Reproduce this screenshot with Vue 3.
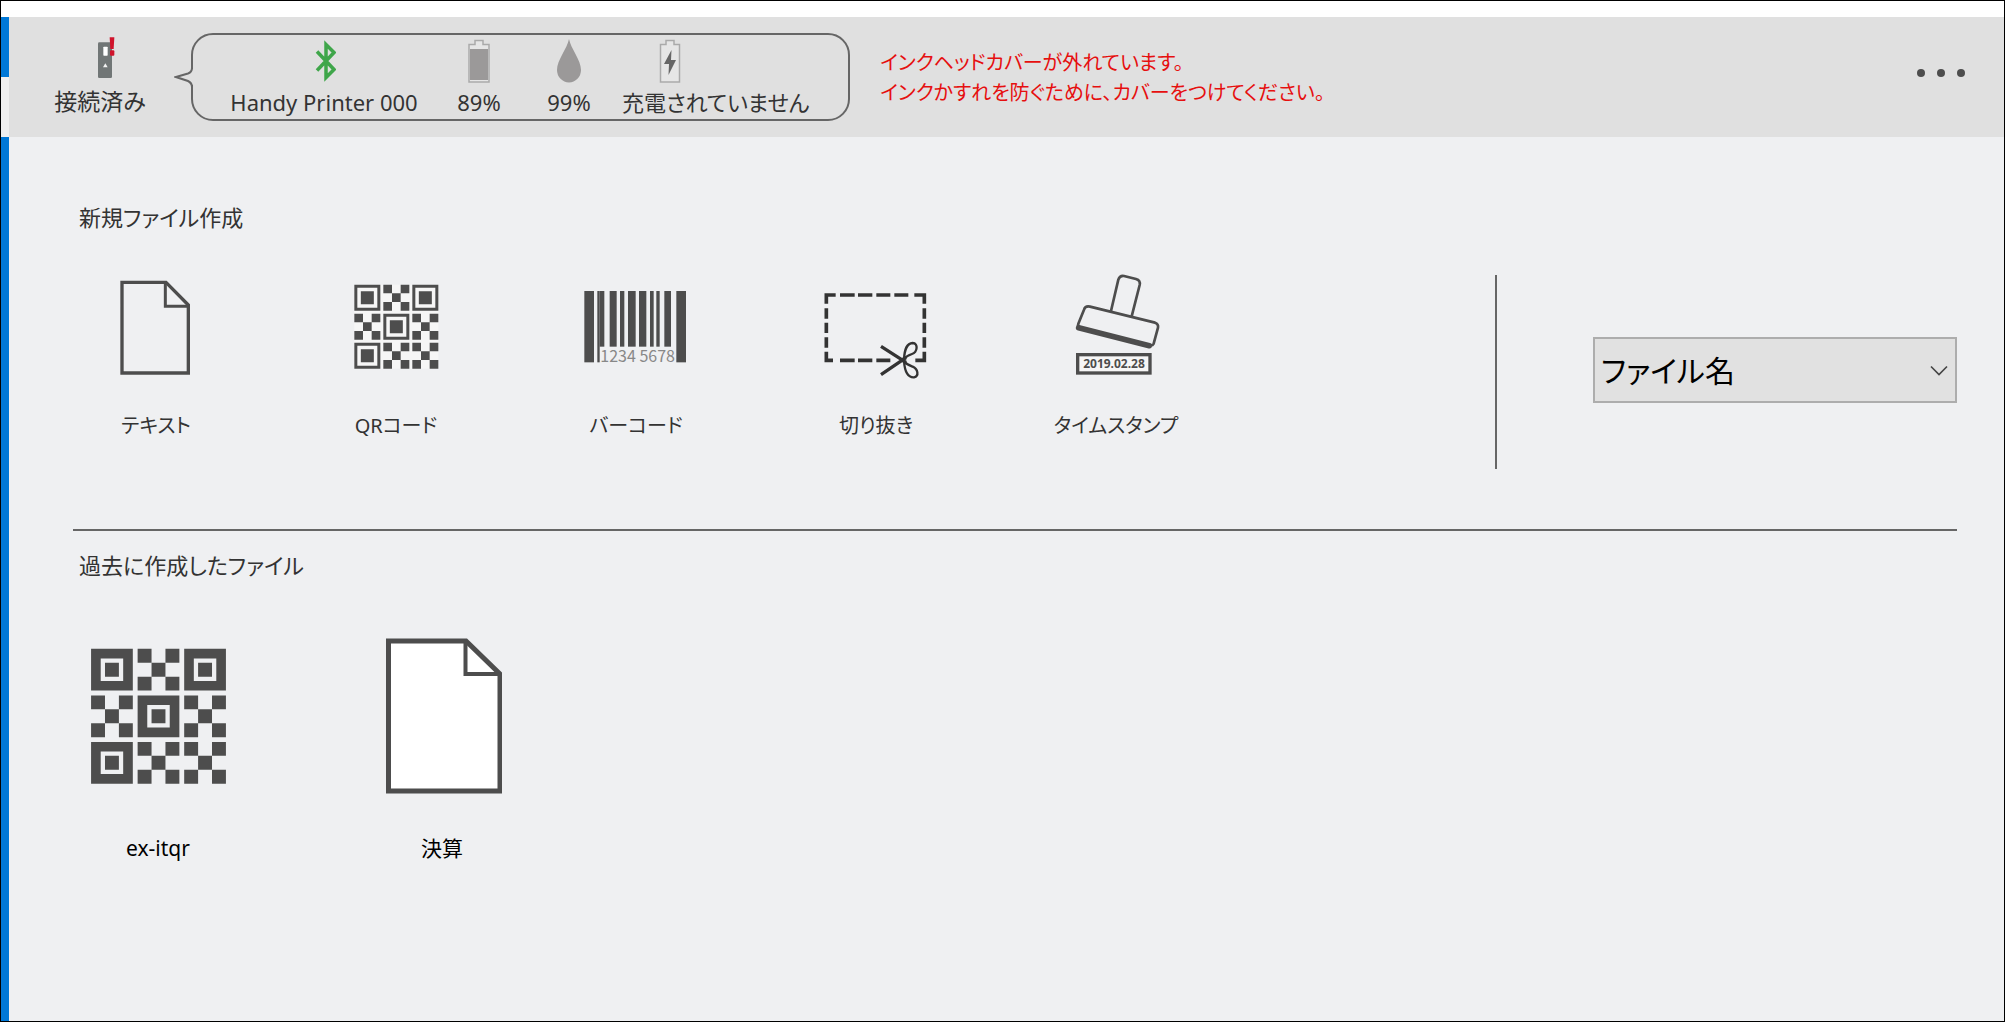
<template>
  <div class="window">
    <div class="title-strip"></div>
    <div class="body">
      <div class="rail">
        <span class="rail-top"></span>
        <span class="rail-gap"></span>
      </div>

      <div class="content">
        <header class="status-bar">
          <div class="connection">
            <svg class="status-icon" width="18" height="44" viewBox="0 0 54 132">
              <rect x="3" y="19" width="42" height="107" rx="4" fill="#717676" />
              <rect x="19" y="32" width="13" height="27" rx="2" fill="#fff" />
              <path d="M25 82 L32 94 H18 Z" fill="#f2f2f2" />
              <path d="M38 4 H52 L50 39 H40 Z" fill="#d0142c" />
              <rect x="39" y="43" width="13" height="16" rx="3" fill="#d0142c" />
            </svg>
            <span class="status-label">接続済み</span>
          </div>

          <div class="bubble">
            <svg class="bubble-tail" width="20" height="26" viewBox="0 0 20 26">
              <rect x="16" y="5" width="4" height="16" fill="#e0e0e0" />
              <path d="M18 2 V4 Q18 8 14 9.500 L2 13 L14 17 Q18 19 18 23 V24" fill="none" stroke="#666" stroke-width="2" />
            </svg>
            <div class="status-item">
              <svg class="status-icon" width="24" height="44" viewBox="0 0 24 44">
                <path d="M5 12.500 L22 30.500 L14 38.500 V5.500 L22 13.500 L5 31.500" fill="none" stroke="#3fa64a" stroke-width="3.500" />
              </svg>
              <span class="status-label">Handy Printer 000</span>
            </div>
            <div class="status-item">
              <svg class="status-icon" width="24" height="44" viewBox="0 0 24 44">
                <path d="M2 5.500 H8 V1.500 H16 V5.500 H22 V43 H2 Z" fill="#e6e6e6" stroke="#aaa" stroke-width="1.500" />
                <rect x="3" y="10" width="18" height="31" fill="#9b9999" />
              </svg>
              <span class="status-label">89%</span>
            </div>
            <div class="status-item">
              <svg class="status-icon" width="24" height="44" viewBox="0 0 24 44">
                <path d="M12 0 C14 10 24 21 24 31 A12 12.500 0 0 1 0 31 C0 21 10 10 12 0 Z" fill="#9b9999" />
              </svg>
              <span class="status-label">99%</span>
            </div>
            <div class="status-item charge">
              <svg class="status-icon" width="24" height="44" viewBox="0 0 24 44">
                <path d="M2.500 5.500 H8 V1.500 H16 V5.500 H21.500 V43 H2.500 Z" fill="#e6e6e6" stroke="#aaa" stroke-width="1.500" />
                <path d="M13.500 11 L6 25 H11 L10.500 36 L18 21 H13 Z" fill="#666" />
              </svg>
              <span class="status-label">充電されていません</span>
            </div>
          </div>

          <p class="warning">インクヘッドカバーが外れています。<br />インクかすれを防ぐために、カバーをつけてください。</p>

          <button class="more" type="button" aria-label="メニュー">
            <svg width="48" height="8" viewBox="0 0 48 8" fill="#4d4d4d">
              <circle cx="4" cy="4" r="4" />
              <circle cx="24" cy="4" r="4" />
              <circle cx="44" cy="4" r="4" />
            </svg>
          </button>
        </header>

        <main class="main">
          <h2 class="section-title">新規ファイル作成</h2>
          <div class="create-row">
            <div class="tiles">
              <button v-for="item in newItems" :key="item.kind" class="tile" type="button">
                <svg class="tile-icon" width="104" height="106" viewBox="0 0 312 318">
                  <g v-if="item.kind === 'text'" fill="none" stroke="#4d4d4d" stroke-width="10">
                    <path d="M54 22 H186 L253 90 V294 H54 Z" />
                    <path d="M184 22 V94 H253" stroke-width="9" />
                  </g>
                  <g v-else-if="item.kind === 'qr'" transform="translate(31 29)">
                    <rect width="252" height="252" fill="#f6f6f6" />
                    <path :d="smallQr" fill="#4d4d4d" fill-rule="evenodd" />
                  </g>
                  <g v-else-if="item.kind === 'barcode'" fill="#4d4d4d">
                    <rect
                      v-for="bar in bars"
                      :key="bar.x"
                      :x="bar.x"
                      y="48"
                      :width="bar.w"
                      :height="bar.tall ? 214 : 167"
                    />
                    <text x="49" y="262" class="barcode-text">1234 5678</text>
                  </g>
                  <g v-else-if="item.kind === 'crop'" fill="none" stroke="#333" stroke-width="11">
                    <path d="M35 60 H7 V86 M48 60 H92 M102 60 H145 M157 60 H199 M211 60 H253 M271 60 H301 V86" />
                    <path d="M7 100 V131 M7 143 V174 M7 187 V218 M301 100 V131 M301 143 V174 M301 187 V218" />
                    <path d="M7 230 V256 H27 M48 256 H92 M102 256 H145 M157 256 H199 M274 256 H301 V230" />
                    <path d="M171 214 L246 262 M171 299 L246 248" stroke-width="10" />
                    <path d="M240 252 C242 222 248 205 266 204 C284 205 280 232 264 237 C254 240 247 243 240 252 Z" stroke-width="7" />
                    <path d="M240 258 C242 288 250 308 270 307 C286 303 282 282 266 275 C256 271 247 268 240 258 Z" stroke-width="7" />
                  </g>
                  <g v-else fill="none" stroke="#4d4d4d" stroke-width="8" stroke-linejoin="round">
                    <path d="M141 108 L163 14 Q167 1 180 3 L216 12 Q230 16 227 30 L203 124" />
                    <path d="M60 104 Q64 92 78 95 L273 143 Q284 147 282 158 L269 206 Q266 213 255 211 L48 158 Q40 155 43 146 Z" />
                    <path d="M44 158 L256 212" stroke-width="17" stroke-linecap="round" />
                    <rect x="41" y="239" width="217" height="55" fill="#f6f6f6" stroke-width="10" stroke-linejoin="miter" />
                    <text x="150" y="279" class="stamp-text">2019.02.28</text>
                  </g>
                </svg>
                <span class="tile-label">{{ item.label }}</span>
              </button>
            </div>

            <div class="sort">
              <div class="sort-box">
                <select v-model="sortKey" class="sort-select" aria-label="ファイル名">
                  <option value="name">ファイル名</option>
                </select>
                <svg class="sort-arrow" width="18" height="12" viewBox="0 0 18 12">
                  <path d="M1 1.500 L9 9.500 L17 1.500" fill="none" stroke="#444" stroke-width="1.600" />
                </svg>
              </div>
            </div>
          </div>

          <hr class="divider" />

          <h2 class="section-title past">過去に作成したファイル</h2>
          <div class="files">
            <button v-for="file in files" :key="file.name" class="file" type="button">
              <svg v-if="file.kind === 'qr'" class="file-icon" width="135" height="160" viewBox="0 0 252 299">
                <path :d="largeQr" fill="#4d4d4d" fill-rule="evenodd" transform="translate(0 24)" />
              </svg>
              <svg v-else class="file-icon" width="120" height="160" viewBox="0 0 120 160">
                <path d="M6.500 5 H84 L118 38 V155 H6.500 Z" fill="#fff" stroke="#4d4d4d" stroke-width="5" />
                <path d="M83.500 5 V38 H117" fill="none" stroke="#4d4d4d" stroke-width="4" />
              </svg>
              <span class="file-label">{{ file.name }}</span>
            </button>
          </div>
        </main>
      </div>
    </div>
  </div>
</template>

<script setup>
import { ref } from 'vue'

const sortKey = ref('name')

const newItems = [
  { kind: 'text', label: 'テキスト' },
  { kind: 'qr', label: 'QRコード' },
  { kind: 'barcode', label: 'バーコード' },
  { kind: 'crop', label: '切り抜き' },
  { kind: 'stamp', label: 'タイムスタンプ' }
]

const files = [
  { kind: 'qr', name: 'ex-itqr' },
  { kind: 'text', name: '決算' }
]

const bars = [
  { x: 1, w: 29, tall: true },
  { x: 40, w: 7, tall: true },
  { x: 47, w: 14 },
  { x: 77, w: 21 },
  { x: 108, w: 13 },
  { x: 132, w: 23 },
  { x: 165, w: 22 },
  { x: 198, w: 11 },
  { x: 217, w: 10 },
  { x: 241, w: 20 },
  { x: 277, w: 29, tall: true }
]

// F = finder square, X = five small modules
const qrLayout = ['FXF', 'XFX', 'FXX']

function square(x, y, size) {
  return `M${x} ${y}h${size}v${size}h${-size}z`
}

function buildQr(ring, core) {
  const block = 78
  const pitch = 87
  const cell = block / 3
  let d = ''
  qrLayout.forEach((row, r) => {
    row.split('').forEach((type, c) => {
      const x = c * pitch
      const y = r * pitch
      if (type === 'F') {
        d += square(x, y, block)
        d += square(x + ring, y + ring, block - ring * 2)
        d += square(x + (block - core) / 2, y + (block - core) / 2, core)
      } else {
        d += square(x, y, cell)
        d += square(x + cell * 2, y, cell)
        d += square(x + cell, y + cell, cell)
        d += square(x, y + cell * 2, cell)
        d += square(x + cell * 2, y + cell * 2, cell)
      }
    })
  })
  return d
}

const smallQr = buildQr(9, 39)
const largeQr = buildQr(18, 26)
</script>

<style>
body {
  margin: 0;
}
</style>

<style scoped>
.window {
  display: flex;
  flex-direction: column;
  box-sizing: border-box;
  min-height: 100vh;
  border: 1px solid #000;
  background: #eff0f2;
  color: #333;
  font-family: "Noto Sans", "Noto Sans CJK JP", sans-serif;
  font-feature-settings: "palt";
}

.title-strip {
  height: 16px;
  background: #fff;
}

.body {
  display: flex;
  flex: 1;
}

.rail {
  width: 8px;
  background: #0078d7;
}

.rail-top,
.rail-gap {
  display: block;
  height: 60px;
}

.rail-gap {
  background: #f0f0f0;
}

.content {
  flex: 1;
}

.status-bar {
  display: flex;
  align-items: flex-start;
  box-sizing: border-box;
  min-height: 120px;
  padding: 16px 39px 16px 0;
  background: #e0e0e0;
}

.connection {
  display: flex;
  flex-direction: column;
  align-items: center;
  width: 182px;
  padding-top: 3px;
}

.status-icon {
  display: block;
}

.status-label {
  margin-top: 3px;
  font-size: 22px;
  line-height: 32px;
  white-space: nowrap;
}

.connection .status-icon {
  margin-left: 12px;
}

.connection .status-label {
  margin-top: 5px;
  font-size: 23px;
}

.bubble {
  position: relative;
  display: grid;
  grid-template-columns: 220px 90px 90px auto;
  padding: 4px 39px 1px 21px;
  border: 2px solid #666;
  border-radius: 22px;
}

.bubble-tail {
  position: absolute;
  left: -19px;
  top: 29px;
}

.status-item {
  display: flex;
  flex-direction: column;
  align-items: center;
}

.charge {
  align-items: flex-start;
  padding-left: 8px;
}

.charge .status-icon {
  margin-left: 36px;
}

.warning {
  margin: 15px 0 0 30px;
  color: #e60f0f;
  font-size: 20px;
  line-height: 30px;
}

.more {
  margin: 28px 0 0 auto;
  padding: 8px 0;
  border: none;
  background: none;
  cursor: pointer;
}

.more svg {
  display: block;
}

.main {
  padding: 64px 47px 64px 64px;
}

.section-title {
  margin: 0;
  padding-left: 6px;
  font-size: 22px;
  font-weight: 400;
  line-height: 32px;
}

.create-row {
  display: flex;
  justify-content: space-between;
  min-height: 194px;
  margin-top: 42px;
}

.tiles {
  display: flex;
  align-items: flex-start;
  gap: 76px;
  padding-left: 1px;
}

.tile,
.file {
  display: flex;
  flex-direction: column;
  align-items: center;
  width: 164px;
  padding: 0;
  border: none;
  background: none;
  color: #333;
  font-family: inherit;
  font-feature-settings: inherit;
  cursor: pointer;
}

.tile-icon {
  display: block;
  overflow: visible;
}

.tile-label {
  margin-top: 29px;
  font-size: 20px;
  line-height: 32px;
}

.barcode-text {
  font-family: "Noto Sans CJK JP", sans-serif;
  font-size: 48px;
  fill: #888;
}

.stamp-text {
  font-family: "Noto Sans", sans-serif;
  font-size: 36px;
  font-weight: 700;
  text-anchor: middle;
  fill: #4d4d4d;
  stroke: none;
}

.sort {
  display: flex;
  align-items: center;
  padding: 0 0 4px 96px;
  border-left: 2px solid #666;
}

.sort-box {
  position: relative;
  width: 364px;
}

.sort-select {
  display: block;
  width: 100%;
  height: 66px;
  padding: 0 40px 0 6px;
  border: 2px solid #adadad;
  border-radius: 0;
  appearance: none;
  background: #e1e1e1;
  color: #000;
  font-family: inherit;
  font-feature-settings: inherit;
  font-size: 30px;
}

.sort-arrow {
  position: absolute;
  right: 9px;
  top: 28px;
  pointer-events: none;
}

.divider {
  height: 2px;
  margin: 60px 0 0;
  border: none;
  background: #666;
}

.past {
  margin-top: 18px;
}

.files {
  display: flex;
  gap: 114px;
  margin-top: 55px;
}

.file {
  width: 170px;
  color: #000;
}

.file-icon {
  display: block;
}

.file-label {
  margin-top: 36px;
  font-size: 21px;
  line-height: 32px;
}
</style>
